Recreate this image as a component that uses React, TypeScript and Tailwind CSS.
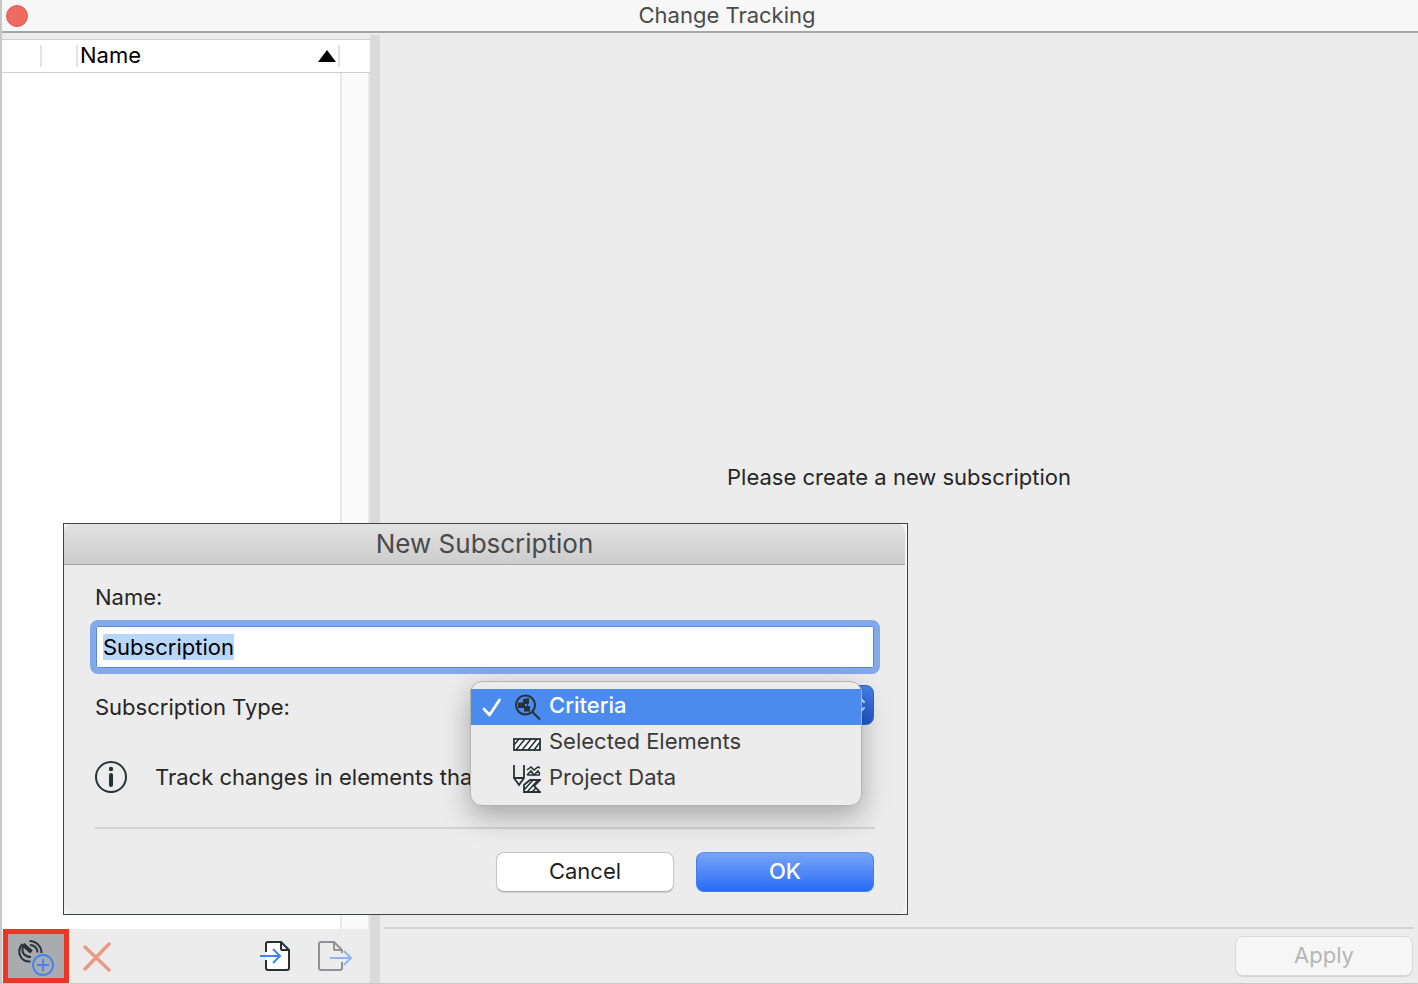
import { useEffect, useRef, useState } from "react";
import type { ReactNode } from "react";

type SubscriptionType = {
  id: string;
  label: string;
  icon: ReactNode;
};

function AddSubscriptionIcon() {
  return (
    <svg width="38" height="38" viewBox="0 0 38 38" fill="none" aria-hidden="true">
      <g stroke="#263238" strokeWidth="2">
        <path d="M5.500 5C-1 12 3 23 13.500 22.500" />
        <path d="M6 8C4 14 8 18 14 18" />
        <path d="M13 6C17 6 20.500 9 20.500 13.500" />
        <path d="M12.500 2C19 2 24.500 7 24.500 14" />
      </g>
      <path d="M6 5.500L14.500 13" stroke="#263238" strokeWidth="4" />
      <g stroke="#3f82f7" strokeWidth="1.800">
        <circle cx="26" cy="26" r="10" />
        <path d="M20 26H32M26 20V32" />
      </g>
    </svg>
  );
}

function DeleteIcon() {
  return (
    <svg width="28" height="32" viewBox="0 0 28 32" fill="none" aria-hidden="true">
      <path d="M2 7L26 30M26 4L2 29" stroke="#ea9a84" strokeWidth="3.500" strokeLinecap="round" />
    </svg>
  );
}

function ImportIcon() {
  return (
    <svg width="32" height="32" viewBox="0 0 32 32" fill="none" aria-hidden="true">
      <path d="M7 12V4Q7 2 9 2H22L30 10V28Q30 30 28 30H9Q7 30 7 28V20" fill="#fff" />
      <path d="M7 12V4Q7 2 9 2H22L30 10V28Q30 30 28 30H9Q7 30 7 28V20M22 2V9Q22 10 23 10H30" stroke="#263238" strokeWidth="2" />
      <path d="M1 16H20M14 9L21 16L14 23" stroke="#3f82f7" strokeWidth="2" />
    </svg>
  );
}

function ExportIcon() {
  return (
    <svg width="36" height="32" viewBox="0 0 36 32" fill="none" aria-hidden="true">
      <path d="M25 13V10L17 2H4Q2 2 2 4V28Q2 30 4 30H23Q25 30 25 28V22M17 2V9Q17 10 18 10H25" stroke="#8f9294" strokeWidth="2" />
      <path d="M13 18H34M27 11L34 18L27 25" stroke="#91b4f3" strokeWidth="2" />
    </svg>
  );
}

function InfoIcon() {
  return (
    <svg width="32" height="32" viewBox="0 0 32 32" fill="none" aria-hidden="true">
      <circle cx="16" cy="16" r="15" stroke="#263238" strokeWidth="2" />
      <circle cx="16" cy="8" r="2.200" fill="#263238" />
      <path d="M16 14V24" stroke="#263238" strokeWidth="4" strokeLinecap="round" />
    </svg>
  );
}

function CheckIcon() {
  return (
    <svg width="20" height="20" viewBox="0 0 20 20" fill="none" aria-hidden="true">
      <path d="M2 12L7.500 18L17.500 3" stroke="#fff" strokeWidth="2.800" strokeLinecap="round" strokeLinejoin="round" />
    </svg>
  );
}

function CriteriaIcon() {
  return (
    <svg width="28" height="28" viewBox="0 0 28 28" fill="none" aria-hidden="true">
      <circle cx="12.500" cy="12" r="9.500" stroke="#263238" strokeWidth="2" />
      <path d="M19 18.500L27 26.500" stroke="#263238" strokeWidth="2.200" />
      <path d="M10 6L16 5V10.500L15 11V13H17V18.500H11V15H5V9.500H10Z" fill="#263238" />
      <path d="M12 11H14V13H12Z" fill="#4b8bee" />
    </svg>
  );
}

function HatchIcon() {
  return (
    <svg width="28" height="28" viewBox="0 0 28 28" fill="none" aria-hidden="true">
      <rect x="1" y="10" width="26" height="11" fill="#fff" stroke="#263238" strokeWidth="1.800" />
      <path d="M1 16L6 10M3 21L12 10M9 21L18 10M15 21L24 10M21 21L27 13" stroke="#263238" strokeWidth="1.600" />
    </svg>
  );
}

function ProjectIcon() {
  return (
    <svg width="28" height="28" viewBox="0 0 28 28" fill="none" aria-hidden="true">
      <path d="M1 0V13L6 20L11 13V0M1 13H11M4 17L6 20L8 17" stroke="#263238" strokeWidth="1.800" />
      <path d="M14 5L18 2L21 5L25 2L27 3M14 10L18 6L21 10L25 6L27 9M14 10H27" stroke="#263238" strokeWidth="1.500" />
      <path d="M11 27V20L17 15H27L21 21L27 27Z" fill="#fff" stroke="#263238" strokeWidth="1.800" />
      <path d="M11 25L20 15M14 27L25 15M19 27L23 23" stroke="#263238" strokeWidth="1.700" />
    </svg>
  );
}

const subscriptionTypes: SubscriptionType[] = [
  { id: "criteria", label: "Criteria", icon: <CriteriaIcon /> },
  { id: "selected", label: "Selected Elements", icon: <HatchIcon /> },
  { id: "project", label: "Project Data", icon: <ProjectIcon /> },
];

function TypeMenu({
  value,
  onSelect,
}: {
  value: string;
  onSelect: (id: string) => void;
}) {
  return (
    <div
      role="listbox"
      aria-label="Subscription Type"
      className="absolute -top-1 left-0 w-[392px] rounded-xl border border-[#b4b4b4] bg-[#ececec] pt-[7px] pb-2 shadow-[0_10px_28px_rgba(0,0,0,0.3)]"
    >
      {subscriptionTypes.map((type) => (
        <button
          key={type.id}
          type="button"
          role="option"
          aria-selected={value === type.id}
          onClick={() => onSelect(type.id)}
          className={`flex h-9 w-full items-center pl-[11px] text-left ${
            value === type.id ? "bg-[#4b8bee] font-medium text-white" : "text-[#3a3a3a]"
          }`}
        >
          <span className="flex w-[31px]">{value === type.id && <CheckIcon />}</span>
          <span className="mr-2">{type.icon}</span>
          <span className="pb-1">{type.label}</span>
        </button>
      ))}
    </div>
  );
}

function NewSubscriptionDialog() {
  const [name, setName] = useState("Subscription");
  const [type, setType] = useState("criteria");
  const inputRef = useRef<HTMLInputElement>(null);

  useEffect(() => {
    inputRef.current?.focus();
    inputRef.current?.select();
  }, []);

  return (
    <section
      role="dialog"
      aria-labelledby="dialog-title"
      className="absolute top-[523px] left-[61px] w-[845px] border border-[#37454e] bg-[#f4f4f4] pr-[2px]"
    >
      <div className="rounded-lg bg-[#ececec]">
        <h2
          id="dialog-title"
          className="flex h-[41px] items-center justify-center rounded-t-lg border-b border-[#a5a5a5] bg-linear-to-b from-[#e2e2e2] to-[#cccccc] text-[26px] text-[#4a4a4a]"
        >
          New Subscription
        </h2>
        <form className="pt-[18px] pr-[30px] pb-[22px] pl-[31px]" onSubmit={(e) => e.preventDefault()}>
          <label htmlFor="name" className="block h-7 leading-7">
            Name:
          </label>
          <input
            id="name"
            ref={inputRef}
            value={name}
            onChange={(e) => setName(e.target.value)}
            className="mt-[15px] ml-px block h-[42px] w-[778px] rounded-[2px] border border-[#5b87cf] bg-white px-[6px] text-black outline-[6px] outline-[#82a9ea] selection:bg-[#b9d6fb] selection:text-black"
          />
          <div className="mt-[17px] flex h-10 items-center">
            <label htmlFor="type" className="w-[375px] pt-1">
              Subscription Type:
            </label>
            <div className="relative w-[404px]">
              <select
                id="type"
                value={type}
                onChange={(e) => setType(e.target.value)}
                className="block h-10 w-full appearance-none rounded-lg border border-[#2e62d0] bg-linear-to-b from-[#4683ea] to-[#2257cd] px-4 text-transparent"
              >
                {subscriptionTypes.map((item) => (
                  <option key={item.id} value={item.id}>
                    {item.label}
                  </option>
                ))}
              </select>
              <svg
                className="pointer-events-none absolute top-2 right-2"
                width="14"
                height="24"
                viewBox="0 0 14 24"
                fill="none"
                aria-hidden="true"
              >
                <path d="M2 9L7 4L12 9M2 15L7 20L12 15" stroke="#d6e2fa" strokeWidth="2" strokeLinecap="round" />
              </svg>
              <TypeMenu value={type} onSelect={setType} />
            </div>
          </div>
          <div className="mt-9 flex h-8 items-center gap-7">
            <InfoIcon />
            <p>Track changes in elements that</p>
          </div>
          <hr className="mt-[34px] border-t-2 border-[#d2d2d2]" />
          <div className="mt-[23px] flex justify-end gap-[22px] pr-px">
            <button
              type="button"
              className="h-10 w-[178px] rounded-lg border border-[#c6c6c6] border-b-[#adadad] bg-white pb-[2px] text-[#1f1f1f] shadow-[0_1px_1px_rgba(0,0,0,0.12)]"
            >
              Cancel
            </button>
            <button
              type="submit"
              className="h-10 w-[178px] rounded-lg border border-[#3f7df0] border-t-[#5c91f3] bg-linear-to-b from-[#78a4f5] to-[#286af7] pb-[2px] font-medium text-white"
            >
              OK
            </button>
          </div>
        </form>
      </div>
    </section>
  );
}

export default function App() {
  return (
    <div className="relative flex min-h-screen flex-col border-b border-l-2 border-b-[#c8c8c8] border-l-[#c8c8c8] bg-[#ececec] font-['Inter',sans-serif] text-[22px] leading-7 text-[#262626]">
      <header className="relative flex h-[33px] items-center justify-center border-b-2 border-[#a6a6a6] bg-[#f7f7f7] pb-[2px] pl-[34px] text-[#4a4a4a]">
        <button
          type="button"
          aria-label="Close"
          className="absolute top-[5px] left-1 size-[22px] rounded-full border border-[#e0584c] bg-[#ed6b60]"
        />
        <h1>Change Tracking</h1>
      </header>

      <div className="flex flex-1">
        <aside className="flex w-[368px] flex-col pt-[6px]">
          <div className="flex h-[34px] items-center border-y border-[#d0d0d0] bg-white text-black">
            <span className="h-[22px] w-10 border-r-2 border-[#e4e4e4]" />
            <span className="h-[22px] w-9 border-r-2 border-[#e4e4e4]" />
            <button
              type="button"
              className="flex h-[22px] w-[262px] items-center justify-between border-r-2 border-[#e4e4e4] pr-[2px] pb-[2px] pl-[2px]"
            >
              Name
              <svg className="mt-[2px]" width="18" height="12" viewBox="0 0 18 12" aria-hidden="true">
                <path d="M0 12L9 0L18 12Z" fill="#000" />
              </svg>
            </button>
          </div>
          <div className="flex flex-1 justify-end bg-white">
            <div className="w-[30px] border-r-2 border-l-2 border-[#e8e8e8] bg-[#fafafa]" />
          </div>
          <div className="flex h-[54px] items-center">
            <button
              type="button"
              aria-label="New subscription"
              className="ml-px flex h-[54px] w-[66px] items-center justify-center border-[5px] border-[#ee3524] bg-[#a9abaf] pt-1"
            >
              <AddSubscriptionIcon />
            </button>
            <button type="button" aria-label="Delete subscription" className="ml-[14px]">
              <DeleteIcon />
            </button>
            <button type="button" aria-label="Import" className="ml-[148px]">
              <ImportIcon />
            </button>
            <button type="button" aria-label="Export" className="ml-[26px]">
              <ExportIcon />
            </button>
          </div>
        </aside>

        <div className="mt-[2px] w-[10px] bg-[#dadada]" />

        <main className="flex flex-1 flex-col px-1">
          <div className="flex flex-1 items-center justify-center pb-[6px]">
            <p>Please create a new subscription</p>
          </div>
          <footer className="flex h-14 items-start justify-end border-t-2 border-[#d4d4d4] pt-[7px] pr-px">
            <button
              type="button"
              disabled
              className="h-10 w-[178px] rounded-lg border border-[#d9d9d9] bg-[#f6f6f6] pb-[2px] text-[#b5b5b5] shadow-[0_1px_1px_rgba(0,0,0,0.1)]"
            >
              Apply
            </button>
          </footer>
        </main>
      </div>

      <NewSubscriptionDialog />
    </div>
  );
}
